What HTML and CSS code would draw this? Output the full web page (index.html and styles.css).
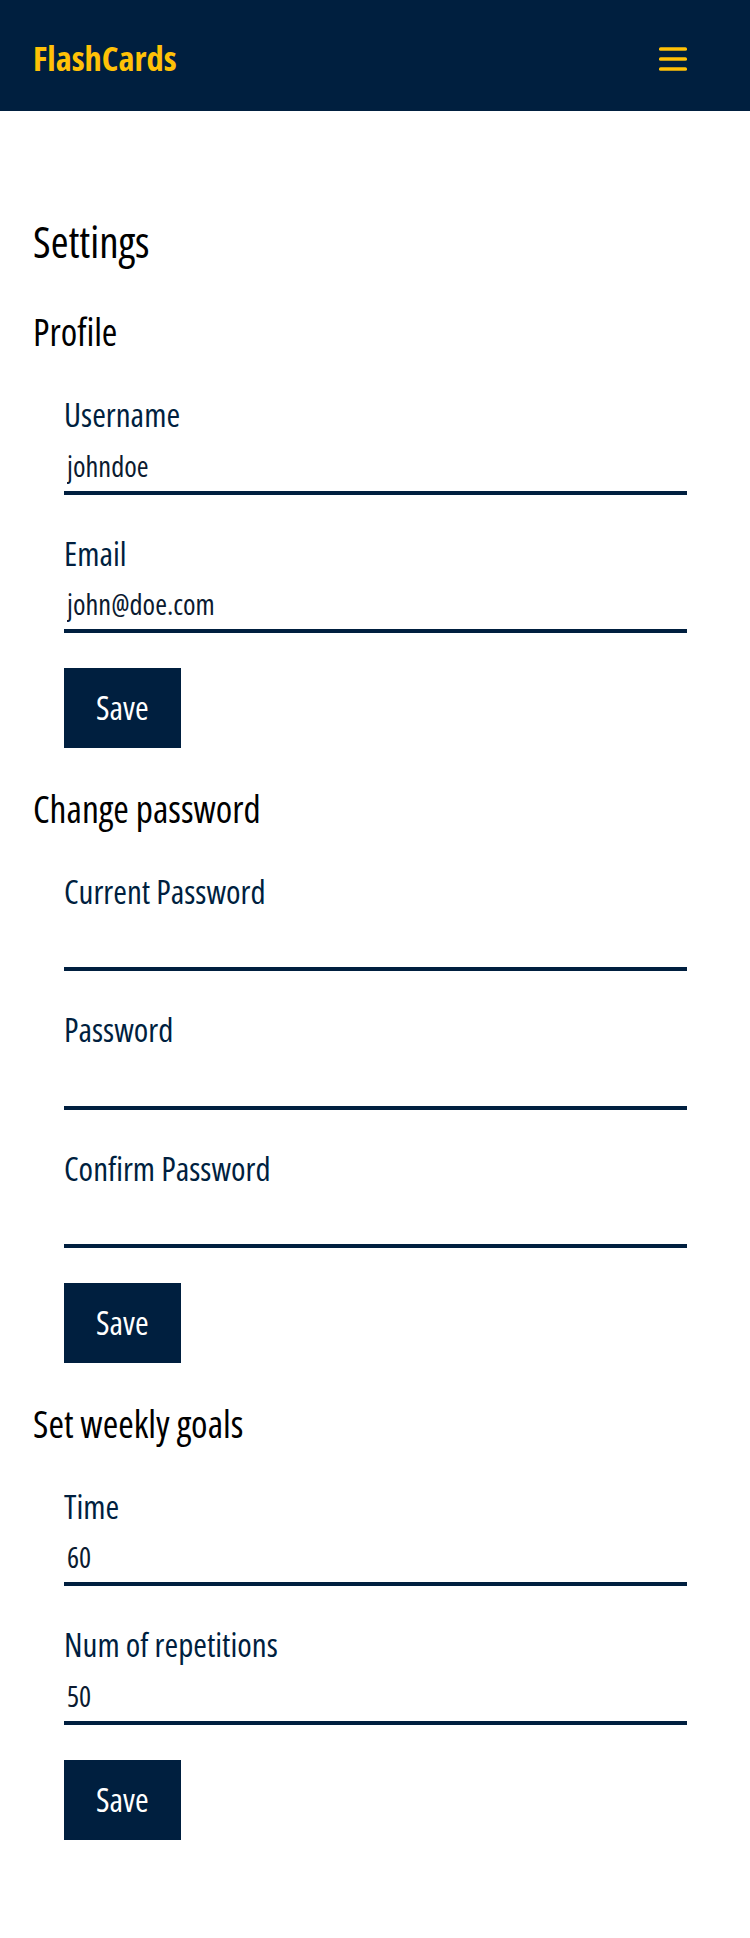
FILE: index.html
```html
<!DOCTYPE html>
<html lang="en">
<head>
<meta charset="utf-8">
<title>FlashCards - Settings</title>
<link rel="stylesheet" href="styles.css">
</head>
<body>
<header class="topbar">
  <a class="brand" href="#">FlashCards</a>
  <button class="menu-toggle" aria-label="Menu">
    <svg width="28" height="24" viewBox="0 0 28 24">
      <rect x="0" y="0.2" width="28" height="3.6" rx="1.6"/>
      <rect x="0" y="10.2" width="28" height="3.6" rx="1.6"/>
      <rect x="0" y="20.2" width="28" height="3.6" rx="1.6"/>
    </svg>
  </button>
</header>
<main class="page">
  <h1 class="page-title">Settings</h1>

  <section class="section">
    <h2 class="section-title">Profile</h2>
    <form class="form">
      <div class="field">
        <label class="field-label" for="username">Username</label>
        <input class="field-input" id="username" type="text" value="johndoe">
      </div>
      <div class="field">
        <label class="field-label" for="email">Email</label>
        <input class="field-input" id="email" type="text" value="john@doe.com">
      </div>
      <button class="btn" type="button">Save</button>
    </form>
  </section>

  <section class="section">
    <h2 class="section-title">Change password</h2>
    <form class="form">
      <div class="field">
        <label class="field-label" for="current">Current Password</label>
        <input class="field-input" id="current" type="password">
      </div>
      <div class="field">
        <label class="field-label" for="password">Password</label>
        <input class="field-input" id="password" type="password">
      </div>
      <div class="field">
        <label class="field-label" for="confirm">Confirm Password</label>
        <input class="field-input" id="confirm" type="password">
      </div>
      <button class="btn" type="button">Save</button>
    </form>
  </section>

  <section class="section">
    <h2 class="section-title">Set weekly goals</h2>
    <form class="form">
      <div class="field">
        <label class="field-label" for="time">Time</label>
        <input class="field-input" id="time" type="text" inputmode="numeric" value="60">
      </div>
      <div class="field">
        <label class="field-label" for="reps">Num of repetitions</label>
        <input class="field-input" id="reps" type="text" inputmode="numeric" value="50">
      </div>
      <button class="btn" type="button">Save</button>
    </form>
  </section>
</main>
</body>
</html>
```
FILE: styles.css
```css
* {
  box-sizing: border-box;
}

html, body {
  margin: 0;
  padding: 0;
  background: #ffffff;
}

body {
  font-family: "Open Sans", "DejaVu Sans Condensed", sans-serif;
  font-stretch: 75%;
  color: #000000;
}

.topbar {
  height: 111px;
  padding: 6px 63px 0 33px;
  background: #001f3f;
  display: flex;
  align-items: center;
  justify-content: space-between;
}

.brand {
  font-size: 34.5px;
  line-height: 1;
  font-weight: 700;
  color: #ffc107;
  text-decoration: none;
}

.menu-toggle {
  display: block;
  padding: 0;
  margin: 0;
  border: 0;
  background: transparent;
  line-height: 0;
}

.menu-toggle svg {
  display: block;
  fill: #ffc107;
}

.page {
  padding: 0 63px 100px 33px;
}

.page-title {
  margin: 106px 0 44px;
  font-size: 43px;
  line-height: 50px;
  font-weight: 400;
}

.section + .section {
  margin-top: 39.5px;
}

.section-title {
  margin: 0 0 44px;
  font-size: 37.5px;
  line-height: 42px;
  font-weight: 400;
}

.form {
  margin: 0 0 0 31px;
  display: flex;
  flex-direction: column;
  align-items: flex-start;
}

.field {
  width: 100%;
  display: flex;
  flex-direction: column;
}

.field + .field {
  margin-top: 41px;
}

.field-label {
  font-size: 33px;
  line-height: 36px;
  color: #001f3f;
}

.field-input {
  display: block;
  width: 100%;
  height: 49px;
  margin: 12.5px 0 0;
  padding: 0 3px 5px;
  border: 0;
  border-bottom: 4px solid #001f3f;
  border-radius: 0;
  background: transparent;
  font-family: inherit;
  font-stretch: 75%;
  font-size: 28.5px;
  color: #0b1a30;
  outline: none;
}

.btn {
  margin-top: 35px;
  height: 80px;
  padding: 0 32px;
  border: 0;
  border-radius: 0;
  background: #001f3f;
  color: #ffffff;
  font-family: inherit;
  font-stretch: 75%;
  font-size: 33px;
  font-weight: 500;
  line-height: 80px;
  cursor: pointer;
}
```
